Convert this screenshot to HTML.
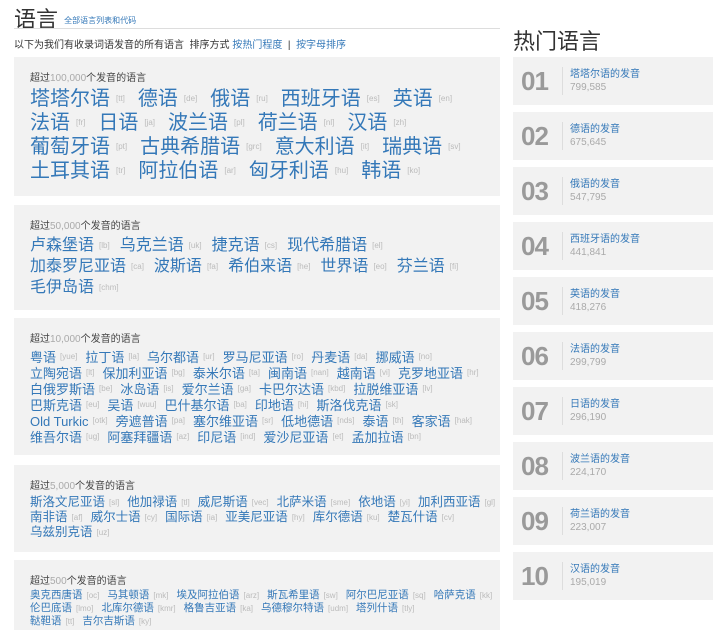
<!DOCTYPE html><html><head><meta charset="utf-8"><style>
*{margin:0;padding:0;box-sizing:border-box}
body{width:720px;height:618px;overflow:hidden;background:#fff;font-family:"Liberation Sans","Noto Sans CJK SC",sans-serif;color:#333;position:relative}
a{color:#3478b8;text-decoration:none}
.c{color:#bbb;font-size:8px;margin:0 8px 0 4px}
.b1 .c{margin:0 13px 0 6px}
.b2 .c{margin:0 10px 0 5px}
.box{position:absolute;left:14px;width:486px;background:#f2f2f2;overflow:hidden}
.h{font-size:10px;color:#444;position:absolute;top:12px;left:16px}
.h span{color:#aaa}
.l{position:absolute;left:16px;right:0}
.l div{white-space:nowrap;overflow:visible;display:flex;align-items:center}
.l div a,.l div span{line-height:1}
.card{position:absolute;left:513px;width:200px;height:48px;background:#f2f2f2}
.n{position:absolute;left:8px;top:9px;font-size:26px;font-weight:bold;color:#9a9a9a;letter-spacing:-1px}
.d{position:absolute;left:49px;top:10px;width:1px;height:28px;background:#ddd}
.t{position:absolute;left:57px;top:11px;font-size:10px;color:#3478b8;line-height:13px}
.t span{color:#aaa}
</style></head><body>
<div style="position:absolute;left:14px;top:2px;font-size:22px;color:#333">语言 <a style="font-size:8px;vertical-align:4px">全部语言列表和代码</a></div>
<div style="position:absolute;left:14px;top:28px;width:486px;height:1px;background:#ddd"></div>
<div style="position:absolute;left:14px;top:36px;font-size:10px;color:#333">以下为我们有收录词语发音的所有语言 &nbsp;排序方式 <a>按热门程度</a> &nbsp;|&nbsp; <a>按字母排序</a></div>

<div class="box b1" style="top:57px;height:139px"><div class="h">超过<span>100,000</span>个发音的语言</div>
<div class="l" style="top:30px;font-size:20px"><div style="height:24px"><a>塔塔尔语</a><span class="c">[tt]</span><a>德语</a><span class="c">[de]</span><a>俄语</a><span class="c">[ru]</span><a>西班牙语</a><span class="c">[es]</span><a>英语</a><span class="c">[en]</span></div><div style="height:24px"><a>法语</a><span class="c">[fr]</span><a>日语</a><span class="c">[ja]</span><a>波兰语</a><span class="c">[pl]</span><a>荷兰语</a><span class="c">[nl]</span><a>汉语</a><span class="c">[zh]</span></div><div style="height:24px"><a>葡萄牙语</a><span class="c">[pt]</span><a>古典希腊语</a><span class="c">[grc]</span><a>意大利语</a><span class="c">[it]</span><a>瑞典语</a><span class="c">[sv]</span></div><div style="height:24px"><a>土耳其语</a><span class="c">[tr]</span><a>阿拉伯语</a><span class="c">[ar]</span><a>匈牙利语</a><span class="c">[hu]</span><a>韩语</a><span class="c">[ko]</span></div></div></div>

<div class="box b2" style="top:205px;height:105px"><div class="h">超过<span>50,000</span>个发音的语言</div>
<div class="l" style="top:30px;font-size:16px"><div style="height:21px"><a>卢森堡语</a><span class="c">[lb]</span><a>乌克兰语</a><span class="c">[uk]</span><a>捷克语</a><span class="c">[cs]</span><a>现代希腊语</a><span class="c">[el]</span></div><div style="height:21px"><a>加泰罗尼亚语</a><span class="c">[ca]</span><a>波斯语</a><span class="c">[fa]</span><a>希伯来语</a><span class="c">[he]</span><a>世界语</a><span class="c">[eo]</span><a>芬兰语</a><span class="c">[fi]</span></div><div style="height:21px"><a>毛伊岛语</a><span class="c">[chm]</span></div></div></div>

<div class="box" style="top:318px;height:137px"><div class="h">超过<span>10,000</span>个发音的语言</div>
<div class="l" style="top:31px;font-size:13px"><div style="height:16px"><a>粤语</a><span class="c">[yue]</span><a>拉丁语</a><span class="c">[la]</span><a>乌尔都语</a><span class="c">[ur]</span><a>罗马尼亚语</a><span class="c">[ro]</span><a>丹麦语</a><span class="c">[da]</span><a>挪威语</a><span class="c">[no]</span></div><div style="height:16px"><a>立陶宛语</a><span class="c">[lt]</span><a>保加利亚语</a><span class="c">[bg]</span><a>泰米尔语</a><span class="c">[ta]</span><a>闽南语</a><span class="c">[nan]</span><a>越南语</a><span class="c">[vi]</span><a>克罗地亚语</a><span class="c">[hr]</span></div><div style="height:16px"><a>白俄罗斯语</a><span class="c">[be]</span><a>冰岛语</a><span class="c">[is]</span><a>爱尔兰语</a><span class="c">[ga]</span><a>卡巴尔达语</a><span class="c">[kbd]</span><a>拉脱维亚语</a><span class="c">[lv]</span></div><div style="height:16px"><a>巴斯克语</a><span class="c">[eu]</span><a>吴语</a><span class="c">[wuu]</span><a>巴什基尔语</a><span class="c">[ba]</span><a>印地语</a><span class="c">[hi]</span><a>斯洛伐克语</a><span class="c">[sk]</span></div><div style="height:16px"><a>Old Turkic</a><span class="c">[otk]</span><a>旁遮普语</a><span class="c">[pa]</span><a>塞尔维亚语</a><span class="c">[sr]</span><a>低地德语</a><span class="c">[nds]</span><a>泰语</a><span class="c">[th]</span><a>客家语</a><span class="c">[hak]</span></div><div style="height:16px"><a>维吾尔语</a><span class="c">[ug]</span><a>阿塞拜疆语</a><span class="c">[az]</span><a>印尼语</a><span class="c">[ind]</span><a>爱沙尼亚语</a><span class="c">[et]</span><a>孟加拉语</a><span class="c">[bn]</span></div></div></div>

<div class="box" style="top:465px;height:87px"><div class="h">超过<span>5,000</span>个发音的语言</div>
<div class="l" style="top:30px;font-size:12.5px"><div style="height:15px"><a>斯洛文尼亚语</a><span class="c">[sl]</span><a>他加禄语</a><span class="c">[tl]</span><a>威尼斯语</a><span class="c">[vec]</span><a>北萨米语</a><span class="c">[sme]</span><a>依地语</a><span class="c">[yi]</span><a>加利西亚语</a><span class="c">[gl]</span></div><div style="height:15px"><a>南非语</a><span class="c">[af]</span><a>威尔士语</a><span class="c">[cy]</span><a>国际语</a><span class="c">[ia]</span><a>亚美尼亚语</a><span class="c">[hy]</span><a>库尔德语</a><span class="c">[ku]</span><a>楚瓦什语</a><span class="c">[cv]</span></div><div style="height:15px"><a>乌兹别克语</a><span class="c">[uz]</span></div></div></div>

<div class="box" style="top:560px;height:70px"><div class="h">超过<span>500</span>个发音的语言</div>
<div class="l" style="top:29px;font-size:10.5px"><div style="height:13px"><a>奥克西唐语</a><span class="c">[oc]</span><a>马其顿语</a><span class="c">[mk]</span><a>埃及阿拉伯语</a><span class="c">[arz]</span><a>斯瓦希里语</a><span class="c">[sw]</span><a>阿尔巴尼亚语</a><span class="c">[sq]</span><a>哈萨克语</a><span class="c">[kk]</span></div><div style="height:13px"><a>伦巴底语</a><span class="c">[lmo]</span><a>北库尔德语</a><span class="c">[kmr]</span><a>格鲁吉亚语</a><span class="c">[ka]</span><a>乌德穆尔特语</a><span class="c">[udm]</span><a>塔列什语</a><span class="c">[tly]</span></div><div style="height:13px"><a>鞑靼语</a><span class="c">[tt]</span><a>吉尔吉斯语</a><span class="c">[ky]</span></div></div></div>

<div style="position:absolute;left:513px;top:24px;font-size:22px;color:#333">热门语言</div>
<div class="card" style="top:57px"><div class="n">01</div><div class="d"></div><div class="t">塔塔尔语的发音<br><span>799,585</span></div></div>
<div class="card" style="top:112px"><div class="n">02</div><div class="d"></div><div class="t">德语的发音<br><span>675,645</span></div></div>
<div class="card" style="top:167px"><div class="n">03</div><div class="d"></div><div class="t">俄语的发音<br><span>547,795</span></div></div>
<div class="card" style="top:222px"><div class="n">04</div><div class="d"></div><div class="t">西班牙语的发音<br><span>441,841</span></div></div>
<div class="card" style="top:277px"><div class="n">05</div><div class="d"></div><div class="t">英语的发音<br><span>418,276</span></div></div>
<div class="card" style="top:332px"><div class="n">06</div><div class="d"></div><div class="t">法语的发音<br><span>299,799</span></div></div>
<div class="card" style="top:387px"><div class="n">07</div><div class="d"></div><div class="t">日语的发音<br><span>296,190</span></div></div>
<div class="card" style="top:442px"><div class="n">08</div><div class="d"></div><div class="t">波兰语的发音<br><span>224,170</span></div></div>
<div class="card" style="top:497px"><div class="n">09</div><div class="d"></div><div class="t">荷兰语的发音<br><span>223,007</span></div></div>
<div class="card" style="top:552px"><div class="n">10</div><div class="d"></div><div class="t">汉语的发音<br><span>195,019</span></div></div>
</body></html>
